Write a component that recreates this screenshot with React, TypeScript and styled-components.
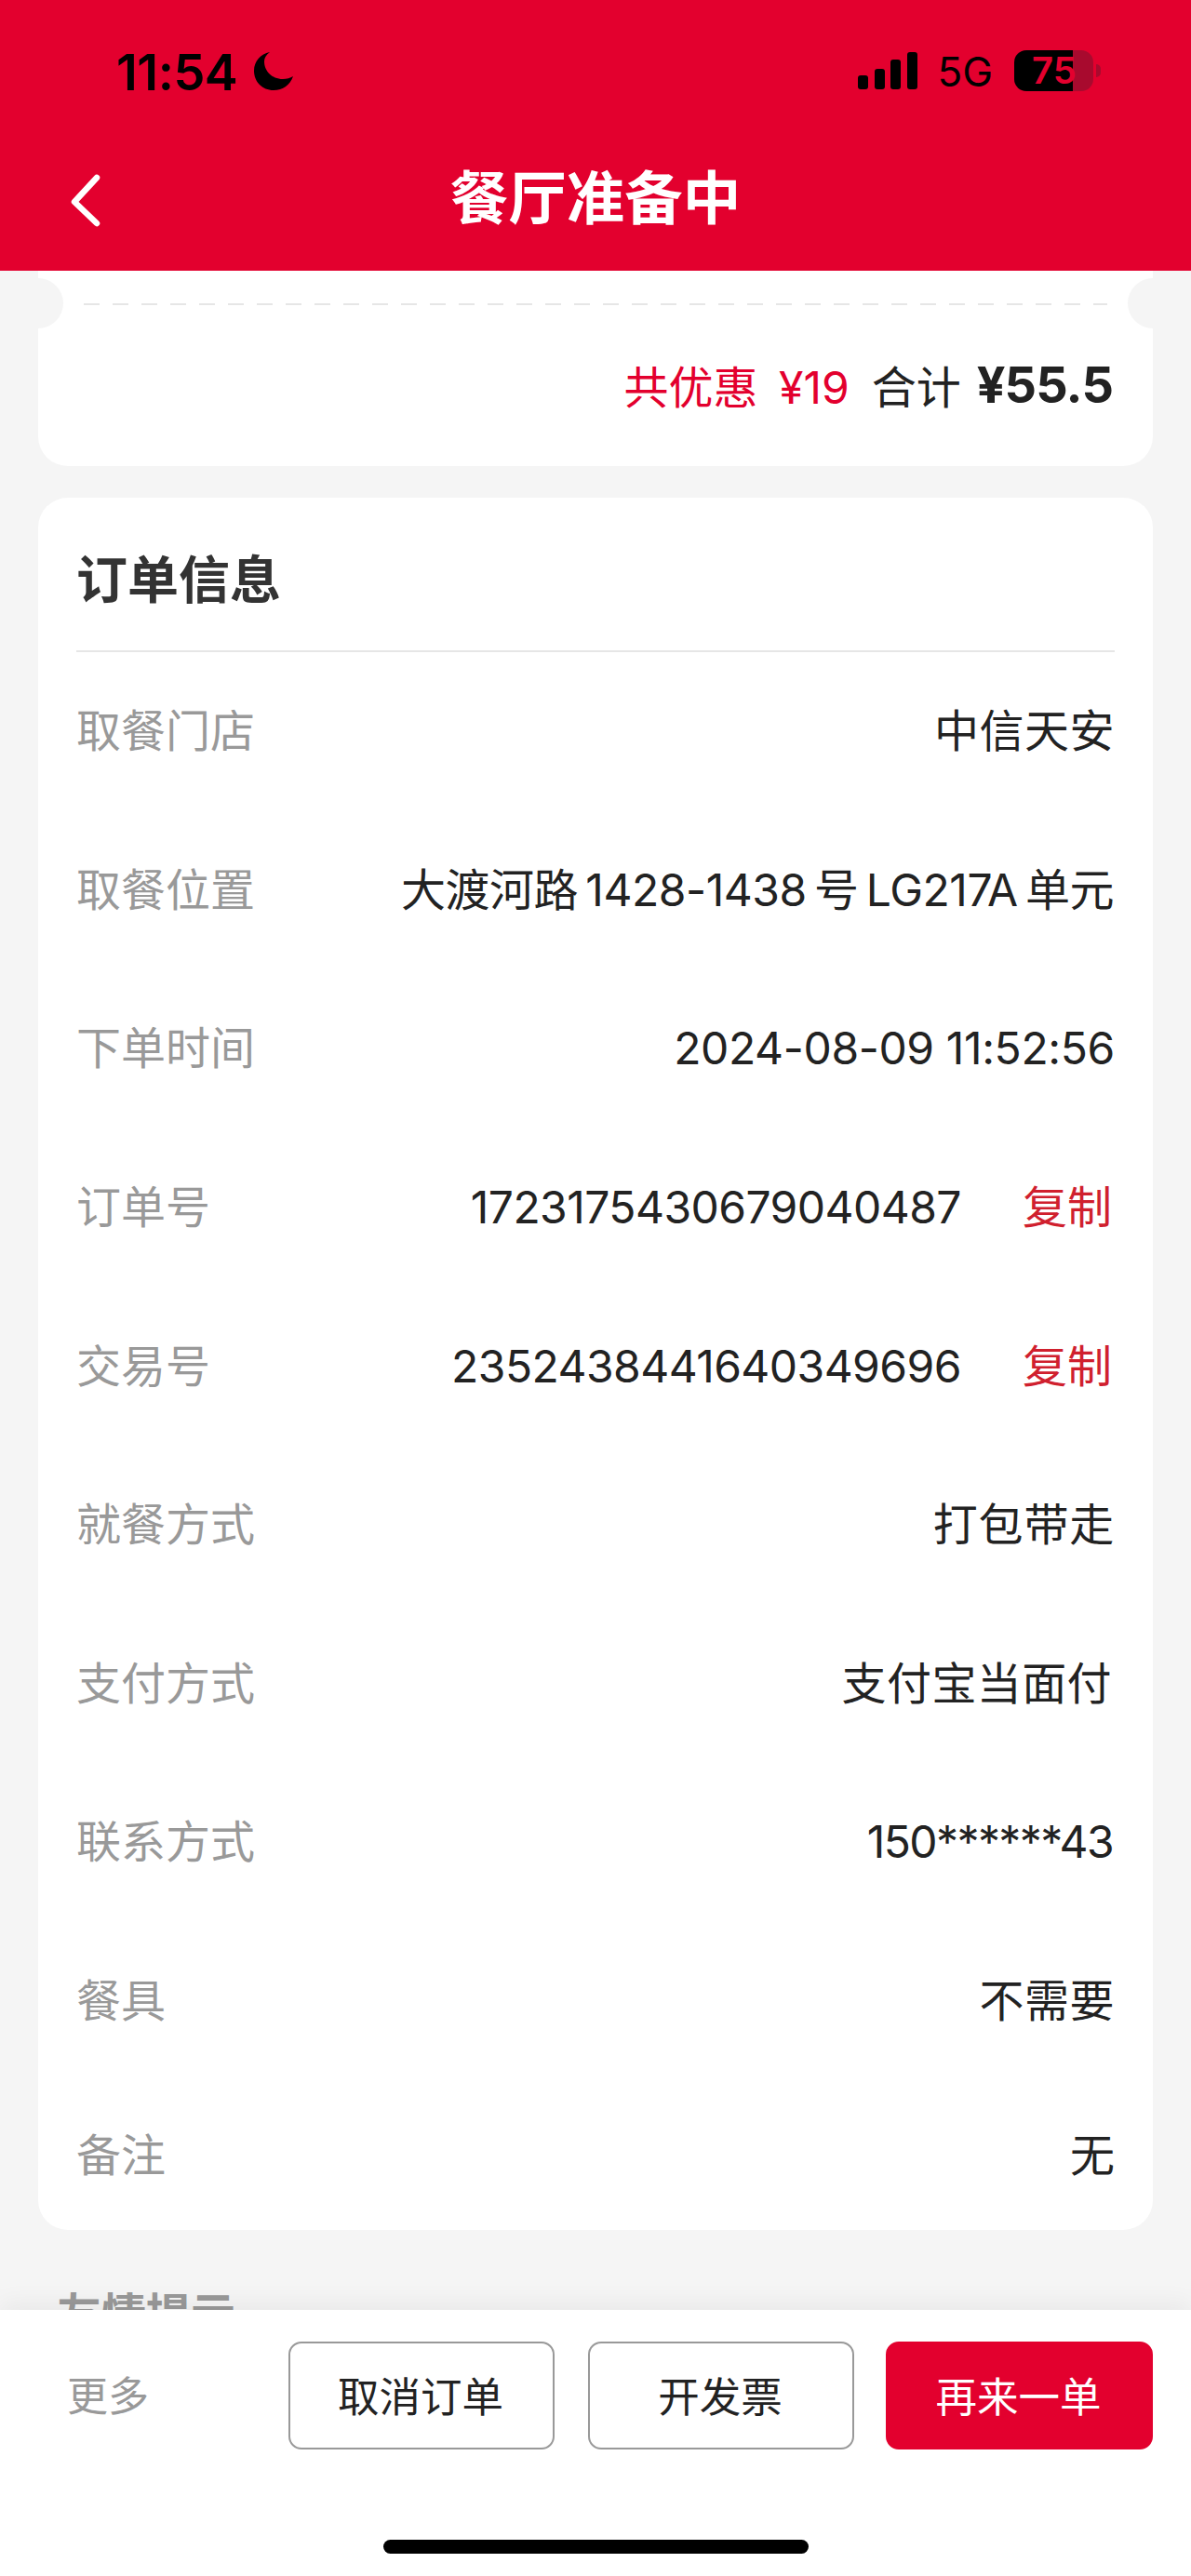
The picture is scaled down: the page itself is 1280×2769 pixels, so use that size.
import React from 'react';
import styled, { createGlobalStyle } from 'styled-components';

const sans = `Inter, "Noto Sans CJK SC", "Liberation Sans", sans-serif`;
const brand = '#e3002e';

const GlobalStyle = createGlobalStyle`
  html, body {
    margin: 0;
    padding: 0;
    background: #f5f5f5;
  }
  * {
    box-sizing: border-box;
  }
`;

const Page = styled.div`
  width: 1280px;
  height: 2769px;
  display: flex;
  flex-direction: column;
  overflow: hidden;
  background: #f5f5f5;
  font-family: ${sans};
  color: #222;
`;

const Header = styled.header`
  height: 291px;
  flex: none;
  background: ${brand};
  display: flex;
  flex-direction: column;
`;

const StatusBar = styled.div`
  height: 100px;
  padding: 53px 105px 0 125px;
  display: flex;
  justify-content: space-between;
  align-items: flex-start;
  color: #000;
`;

const StatusGroup = styled.div`
  display: flex;
  align-items: center;
  height: 46px;
`;

const Clock = styled.span`
  font-size: 54px;
  font-weight: 600;
  line-height: 46px;
  letter-spacing: -0.5px;
  margin-right: 18px;
  position: relative;
  top: 2px;
`;

const Network = styled.span`
  font-size: 44px;
  font-weight: 400;
  line-height: 46px;
  margin: 0 23px 0 21px;
  position: relative;
  top: 1px;
`;

const Battery = styled.span`
  position: relative;
  width: 85px;
  height: 44px;
  border-radius: 13px;
  background: linear-gradient(to right, #000 74%, #a80a2e 74%);
  color: ${brand};
  font-size: 40px;
  font-weight: 600;
  line-height: 44px;
  padding-left: 19px;

  &::after {
    content: '';
    position: absolute;
    right: -8px;
    top: 15px;
    width: 5px;
    height: 14px;
    border-radius: 0 7px 7px 0;
    background: #a80a2e;
  }
`;

const NavBar = styled.div`
  flex: 1;
  position: relative;
  display: flex;
  align-items: center;
  justify-content: center;
  padding-top: 35px;
`;

const BackIcon = styled.svg`
  position: absolute;
  left: 72px;
  top: 85px;
  width: 38px;
  height: 60px;
`;

const Title = styled.h1`
  margin: 0;
  color: #fff;
  font-size: 62.5px;
  font-weight: 700;
  line-height: 80px;
`;

const Content = styled.main`
  flex: 1;
  min-height: 0;
  overflow: hidden;
  padding: 0 41px;
  display: flex;
  flex-direction: column;
`;

const TicketCard = styled.section`
  position: relative;
  flex: none;
  height: 210px;
  background: #fff;
  border-radius: 0 0 32px 32px;
  padding: 34px 43px 0 49px;
  display: flex;
  align-items: center;
  justify-content: flex-end;
`;

const Notch = styled.span<{ $side: 'left' | 'right' }>`
  position: absolute;
  top: 8px;
  ${p => p.$side}: -27px;
  width: 54px;
  height: 54px;
  border-radius: 50%;
  background: #f5f5f5;
`;

const Dashes = styled.div`
  position: absolute;
  top: 35px;
  left: 49px;
  right: 49px;
  height: 2px;
  background: repeating-linear-gradient(to right, #e6e6e6 0 17px, transparent 17px 31px);
`;

const Discount = styled.span`
  color: ${brand};
  font-size: 48px;
  word-spacing: 9px;
  margin-right: 24px;
`;

const TotalLabel = styled.span`
  font-size: 48px;
  margin-right: 17px;
`;

const TotalValue = styled.span`
  font-size: 54px;
  font-weight: 700;
  letter-spacing: -0.9px;
`;

const InfoCard = styled.section`
  flex: none;
  margin-top: 34px;
  height: 1862px;
  background: #fff;
  border-radius: 32px;
  padding: 0 41px;
`;

const CardTitle = styled.h2`
  margin: 0;
  height: 166px;
  border-bottom: 2px solid #e6e6e6;
  padding: 48px 0 0;
  font-size: 55px;
  font-weight: 700;
  line-height: 80px;
  color: #333;
`;

const Row = styled.div`
  height: 170.6px;
  display: flex;
  align-items: center;
  justify-content: space-between;
  font-size: 48px;
  line-height: 60px;

  &:last-child {
    height: 162px;
  }
`;

const RowLabel = styled.span`
  color: #999;
`;

const RowValue = styled.span<{ $tracking?: number; $inset?: number }>`
  color: #222;
  display: flex;
  align-items: center;
  letter-spacing: ${p => p.$tracking ?? 0}px;
  margin-right: ${p => p.$inset ?? 0}px;
`;

const Copy = styled.span`
  color: #d0202e;
  letter-spacing: 0;
  margin: 0 3px 0 66px;
`;

const Tips = styled.h3`
  margin: 61px 0 0 20px;
  font-size: 48px;
  font-weight: 700;
  line-height: 60px;
  color: #999;
`;

const Footer = styled.footer`
  position: relative;
  flex: none;
  height: 286px;
  background: #fff;
  padding: 34px 41px 0;
  box-shadow: 0 -8px 24px rgba(0, 0, 0, 0.05);
`;

const Actions = styled.div`
  display: flex;
  align-items: center;
`;

const More = styled.span`
  flex: 1;
  padding: 0 0 4px 31px;
  color: #999;
  font-size: 44px;
`;

const ActionButton = styled.button<{ $primary?: boolean }>`
  height: 116px;
  width: ${p => (p.$primary ? 287 : 286)}px;
  margin-left: ${p => (p.$primary ? 34 : 36)}px;
  border-radius: 14px;
  border: 2px solid ${p => (p.$primary ? brand : '#999')};
  background: ${p => (p.$primary ? brand : '#fff')};
  color: ${p => (p.$primary ? '#fff' : '#222')};
  font-family: inherit;
  font-size: 44.5px;
  padding: 0 2px 4px 0;

  &:first-of-type {
    margin-left: 0;
  }
`;

const HomeBar = styled.div`
  position: absolute;
  left: 412px;
  bottom: 24px;
  width: 457px;
  height: 15px;
  border-radius: 8px;
  background: #000;
`;

const rows: { label: string; value: string; copy?: boolean; tracking?: number; inset?: number }[] = [
  { label: '取餐门店', value: '中信天安', tracking: 0.5 },
  { label: '取餐位置', value: '大渡河路\u20091428-1438\u2009号\u2009LG217A\u2009单元', tracking: -0.45, inset: 1 },
  { label: '下单时间', value: '2024-08-09 11:52:56', tracking: -0.37 },
  { label: '订单号', value: '1723175430679040487', copy: true, tracking: -0.55 },
  { label: '交易号', value: '2352438441640349696', copy: true, tracking: -0.55 },
  { label: '就餐方式', value: '打包带走', tracking: 0.8 },
  { label: '支付方式', value: '支付宝当面付', tracking: 0.4, inset: 3 },
  { label: '联系方式', value: '150******43', tracking: -1.6, inset: 2 },
  { label: '餐具', value: '不需要', tracking: 0.5 },
  { label: '备注', value: '无' },
];

export default function App() {
  return (
    <Page>
      <GlobalStyle />
      <Header>
        <StatusBar>
          <StatusGroup>
            <Clock>11:54</Clock>
            <svg width="42" height="42" viewBox="0 0 42 42">
              <path d="M17 1C7 3 0 11 0 21c0 12 9 21 21 21 10 0 18-6 21-15-3 2-7 3-11 3-12 0-20-9-20-19 0-4 2-7 6-10z" fill="#000" />
            </svg>
          </StatusGroup>
          <StatusGroup>
            <svg width="64" height="42" viewBox="0 0 64 42">
              <rect x="0" y="26" width="11" height="15" rx="3" fill="#000" />
              <rect x="18" y="19" width="11" height="22" rx="3" fill="#000" />
              <rect x="35" y="9" width="11" height="32" rx="3" fill="#000" />
              <rect x="53" y="1" width="11" height="40" rx="3" fill="#000" />
            </svg>
            <Network>5G</Network>
            <Battery>75</Battery>
          </StatusGroup>
        </StatusBar>
        <NavBar>
          <BackIcon viewBox="0 0 38 60" fill="none">
            <path d="M32 6 L8 32 L32 55" stroke="#fff" strokeWidth="6.5" strokeLinecap="round" strokeLinejoin="round" />
          </BackIcon>
          <Title>餐厅准备中</Title>
        </NavBar>
      </Header>
      <Content>
        <TicketCard>
          <Notch $side="left" />
          <Notch $side="right" />
          <Dashes />
          <Discount>共优惠 ¥19</Discount>
          <TotalLabel>合计</TotalLabel>
          <TotalValue>¥55.5</TotalValue>
        </TicketCard>
        <InfoCard>
          <CardTitle>订单信息</CardTitle>
          <div>
            {rows.map(r => (
              <Row key={r.label}>
                <RowLabel>{r.label}</RowLabel>
                <RowValue $tracking={r.tracking} $inset={r.inset}>
                  {r.value}
                  {r.copy && <Copy>复制</Copy>}
                </RowValue>
              </Row>
            ))}
          </div>
        </InfoCard>
        <Tips>友情提示</Tips>
      </Content>
      <Footer>
        <Actions>
          <More>更多</More>
          <ActionButton>取消订单</ActionButton>
          <ActionButton>开发票</ActionButton>
          <ActionButton $primary>再来一单</ActionButton>
        </Actions>
        <HomeBar />
      </Footer>
    </Page>
  );
}
